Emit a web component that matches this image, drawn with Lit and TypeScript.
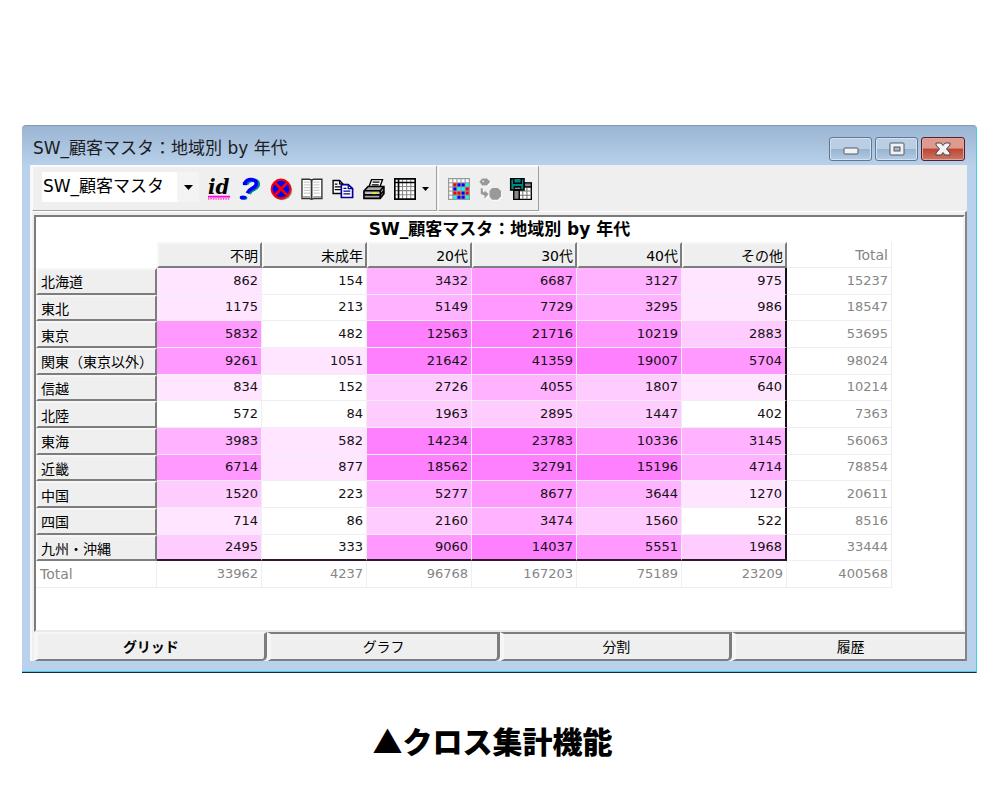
import { LitElement, html, css, svg } from "lit";
import { customElement, state } from "lit/decorators.js";
import { classMap } from "lit/directives/class-map.js";

type Row = { name: string; cells: number[]; heat: number[]; total: number };

const COLUMNS = ["不明", "未成年", "20代", "30代", "40代", "その他"];

const ROWS: Row[] = [
  { name: "北海道", cells: [862, 154, 3432, 6687, 3127, 975], heat: [1, 0, 3, 4, 3, 1], total: 15237 },
  { name: "東北", cells: [1175, 213, 5149, 7729, 3295, 986], heat: [1, 0, 3, 4, 3, 1], total: 18547 },
  { name: "東京", cells: [5832, 482, 12563, 21716, 10219, 2883], heat: [4, 0, 5, 5, 4, 2], total: 53695 },
  { name: "関東（東京以外）", cells: [9261, 1051, 21642, 41359, 19007, 5704], heat: [4, 1, 5, 5, 5, 4], total: 98024 },
  { name: "信越", cells: [834, 152, 2726, 4055, 1807, 640], heat: [1, 0, 2, 3, 2, 1], total: 10214 },
  { name: "北陸", cells: [572, 84, 1963, 2895, 1447, 402], heat: [0, 0, 2, 2, 2, 0], total: 7363 },
  { name: "東海", cells: [3983, 582, 14234, 23783, 10336, 3145], heat: [3, 1, 5, 5, 4, 3], total: 56063 },
  { name: "近畿", cells: [6714, 877, 18562, 32791, 15196, 4714], heat: [4, 1, 5, 5, 5, 3], total: 78854 },
  { name: "中国", cells: [1520, 223, 5277, 8677, 3644, 1270], heat: [2, 0, 3, 4, 3, 1], total: 20611 },
  { name: "四国", cells: [714, 86, 2160, 3474, 1560, 522], heat: [1, 0, 2, 3, 2, 0], total: 8516 },
  { name: "九州・沖縄", cells: [2495, 333, 9060, 14037, 5551, 1968], heat: [2, 0, 4, 5, 4, 2], total: 33444 },
];

const TOTALS = [33962, 4237, 96768, 167203, 75189, 23209, 400568];
const TABS = ["グリッド", "グラフ", "分割", "履歴"];

const icon = (body: unknown) => html`<svg class="icon" viewBox="0 0 16 16" aria-hidden="true">${body}</svg>`;

const dots: string[] = ["wwwww", "wrbbc", "wbccr", "wrrbr", "wcbbc"];
const dotColor: Record<string, string> = { w: "#fff", r: "#f00", b: "#00f", c: "#0ff" };

const ICONS = {
  id: icon(svg`
    <text x="7.800" y="11.400" text-anchor="middle" font-family="DejaVu Serif, serif" font-style="italic" font-weight="bold" font-size="14.500" fill="#000">id</text>
    <path d="M0 13.600h16" stroke="#f0f" stroke-width="1.400"/>
    <path d="M0 15.200h16" stroke="#f0f" stroke-width="1" stroke-dasharray="1 .8"/>
    <path d="M.5 14.500h15.500" stroke="#fc0" stroke-width=".7" stroke-dasharray=".8 1"/>`),
  help: icon(svg`
    <path d="M4.600 4.200C5.600 1.600 8 1 10 1.200c4.200.5 3.800 4.400 1 6C9 8.400 7.500 8.500 6.500 11.200" fill="none" stroke="#088" stroke-width="2.600" transform="translate(.9 .4)"/>
    <path d="M4.300 3.900C5.200 1.500 7.600 1 9.600 1.200c4 .5 3.600 4.200 1 5.800C8.600 8.200 7 8.400 6 11" fill="none" stroke="#00f" stroke-width="2.600"/>
    <path d="M2.800 2.800h3.200v2.400H2.800z" fill="#00f"/><ellipse cx="3.500" cy="14.500" rx="2.600" ry="1.400" fill="#088"/><ellipse cx="2.900" cy="14.200" rx="2.400" ry="1.400" fill="#00f"/>`),
  stop: icon(svg`
    <circle cx="8.700" cy="8.800" r="7.400" fill="#888"/>
    <circle cx="8" cy="8" r="6.800" fill="#00f" stroke="#f00" stroke-width="1.500"/>
    <path d="M3.500 3.500l9 9M12.500 3.500l-9 9" stroke="#f00" stroke-width="2"/>`),
  book: icon(svg`
    <path d="M.7.900h5.500l1.500.7 1.500-.7h6v14H9.200l-1.500.6-1.500-.6H.7z" fill="#fff" stroke="#333" stroke-width="1"/>
    <path d="M7.700 1.200v14" stroke="#333" stroke-width="1.300"/>
    <path d="M2 3h4.500M2 5h4.500M2 7h4.500M2 9h4.500M2 11h4.500M9 3h4.500M9 5h4.500M9 7h4.500M9 9h4.500M9 11h4.500" stroke="#ccc" stroke-width=".8"/>
    <path d="M1 13.700h5.500M9 13.700h5.500" stroke="#888" stroke-width=".8"/>`),
  copy: icon(svg`
    <path d="M.8 1.800h4.700l2.500 2.500v7H.8z" fill="#fff" stroke="#000"/>
    <path d="M5.500 1.800v2.500H8M2 4.500h2M2 6.500h4.500M2 8.500h4.500" fill="none" stroke="#000" stroke-width=".9"/>
    <path d="M6.800 4.800h5l3.200 3v6.400H6.800z" fill="#fff" stroke="#009" stroke-width="1.200"/>
    <path d="M11.800 4.800v3h3M8.300 7.500h2.200M8.300 9.500h5M8.300 11.500h5" fill="none" stroke="#009" stroke-width=".9"/>`),
  print: icon(svg`
    <path d="M4.300 6.500L6.200 1.200h8l-2 5.500z" fill="#fff" stroke="#000"/>
    <path d="M7 3h5M6.400 5h5" stroke="#000" stroke-width=".8"/>
    <path d="M.7 9.500l3-3.300h11.500v5.300l-2.700 3.300H.7z" fill="#aaa" stroke="#000" stroke-width="1.200"/>
    <path d="M1 9.300h11.600l2.300-3M1 12.300h11.500l2.600-3M12.500 9.300v5.200" fill="none" stroke="#000" stroke-width="1.200"/>
    <path d="M2 10.500h10v1H2z" fill="#ccc"/><path d="M7 10.300h2.800v1.400H7z" fill="#ee0"/>`),
  grid: icon(svg`
    <path d="M.6.600h14.800v14.800H.6z" fill="#fff"/>
    <path d="M6.200 1v14M9.200 1v14M12.200 1v14M1 6.200h14M1 9.200h14M1 12.200h14" stroke="#888" stroke-width=".8"/>
    <path d="M.6.600h14.800v14.800H.6zM3.300 1v14M1 3.300h14" fill="none" stroke="#000" stroke-width="1.200"/>`),
  heat: icon(svg`
    <path d="M0 0h16v16H0z" fill="#999"/>
    ${dots.map((line, r) => [...line].map((c, i) => svg`<rect x=${i * 3 + 0.9} y=${r * 3 + 0.9} width="2.200" height="2.200" fill=${dotColor[c]}/>`))}`),
  convert: icon(svg`
    <path d="M1 3.500L3 1h3l3 2.500L6.500 6H3zM2 8.500v4l2.500 1.500v2l3.500-3-3.500-3v1.500H4l-.5-3zM10 8.500h4L16.500 11v3L14 16.500h-4L8.200 14v-3z" fill="#fff"/>
    <path d="M.3 2.800L2.300.3h3.500L8.200 2.800 5.800 5.500H2.300zM1.300 7.500v4.200l2.700 1v2.300l3-3.200-3-2.800v1.300H3L2.500 7.500zM9.500 7.200h4.200L16 9.500v4l-2.300 2.300H9.500L7.700 13.500v-4z" fill="#999"/>
    <circle cx="3" cy="2.400" r=".6" fill="#fff"/>`),
  export: icon(svg`
    <path d="M6.500 4h9v11.500h-9z" fill="#fff" stroke="#000"/>
    <path d="M10.500 3.500h5v3h-5z" fill="#888" stroke="#000"/>
    <path d="M9.300 9v6.500M12.300 7v8.500M6 9.500h9.500M6 12.500h9.500" stroke="#777" stroke-width=".8"/>
    <path d="M.5.500h9.700v8.300H.5z" fill="#088" stroke="#000" stroke-width="1.100"/>
    <path d="M2.700.8v3h5.500v-3" fill="#088" stroke="#000"/><path d="M2.700 5.800h5.500v3H2.700z" fill="#000"/><path d="M3.500 7h4v1h-4z" fill="#888"/>
    <path d="M2.700 9h4v6.500h-4z" fill="#888" stroke="#000"/>`),
};

@customElement("app-root")
export class AppRoot extends LitElement {
  @state() private active = 0;

  static styles = css`
    :host {
      display: block;
      box-sizing: border-box;
      min-height: 100vh;
      padding: 125px 23px 32px 22px;
      background: #fff;
      color: #000;
      font: 13px/20px "DejaVu Sans", "Noto Sans CJK JP", sans-serif;
    }
    * { box-sizing: border-box; }
    button, select { font: inherit; color: inherit; margin: 0; padding: 0; border: 0; background: none; }
    .window {
      padding: 0 9px 11px 8px;
      border-radius: 4px 4px 0 0;
      border-top: 1px solid #8399b1;
      border-right: 1px solid #45cdee;
      border-bottom: 1px solid #102c38;
      box-shadow: inset 0 -1px #45cdee;
      background: linear-gradient(#9ab5d3, #b9d1ea 40px, #b9d1ea);
    }
    .titlebar { display: flex; align-items: center; justify-content: space-between; height: 39px; }
    .caption, .combo select, .sheet-title { font-size: 17px; line-height: 25px; }
    .caption { margin: 0; padding: 6px 0 0 3px; font-weight: 400; color: #1c1c24; }
    .controls { display: flex; gap: 3px; padding: 7px 2px 0 0; }
    .control {
      display: grid; place-items: center; width: 43px; height: 24px;
      border: 1px solid #5f7795; border-radius: 3px;
      box-shadow: inset 0 0 0 1px #d3e1f0;
      background: linear-gradient(#bacee4 48%, #98b3cf 50%, #b4cce4);
    }
    .control.close {
      width: 44px;
      border-color: #54202a;
      box-shadow: inset 0 0 0 1px #e2a49a;
      background: linear-gradient(#dd9a8f 46%, #bd4431 50%, #cc7765);
    }
    .glyph { display: block; width: 16px; height: 14px; }
    .client { background: #efefef; border-left: 2px solid #f8f8f8; }
    .toolbar { display: flex; gap: 1px; height: 46px; }
    .group {
      display: flex; align-items: center; padding: 0 6px 0 2px;
      border-top: 2px solid #fbfbfb; border-left: 1px solid #fbfbfb;
      border-right: 1px solid #a0a0a0; border-bottom: 1px solid #a0a0a0;
    }
    .group + .group { padding: 0 2px 0 4px; }
    .combo { display: grid; grid-template-columns: 135px 22px; align-items: stretch; height: 30px; margin: 0 4px 3px 7px; background: #fff; }
    .combo select { grid-area: 1 / 1 / 2 / 3; appearance: none; padding: 0 0 2px 1px; }
    .drop { grid-area: 1 / 2; display: grid; place-items: center; background: #f4f4f4; pointer-events: none; }
    .tool { display: grid; place-items: center; width: 31px; height: 32px; }
    .tool.narrow { width: 10px; }
    .icon { display: block; width: 22px; height: 22px; overflow: visible; }
    .arrow { display: block; width: 9px; height: 5px; }
    .tool .arrow { width: 7px; height: 4px; }
    .panel {
      padding: 3px 0 0 2px;
      border-top: 1px solid #fff;
      border-right: 2px solid #848484;
    }
    .sheet {
      height: 417px; overflow: auto;
      border-top: 2px solid #7b7b7b; border-left: 2px solid #7b7b7b;
      border-right: 2px solid #f4f4f4; border-bottom: 2px solid #e9e9e9;
      background: #fff;
    }
    .sheet-title { margin: 0; font-weight: 700; text-align: center; }
    table { border-collapse: separate; border-spacing: 0; table-layout: fixed; width: 856px; height: 346px; }
    .namecol { width: 121px; }
    th, td { height: 26px; padding: 0 3px; text-align: right; font-weight: 400; line-height: 20px; white-space: nowrap; border-right: 1px solid #f0eef0; border-bottom: 1px solid #f0eef0; }
    td { color: #141014; }
    td.corner { border: 0; }
    th { font-size: 14px; }
    th.head {
      background: #efefef; border-top: 2px solid #f6f6f6; border-left: 2px solid #f8f8f8;
      border-right: 2px solid #7d7d7d; border-bottom: 2px solid #7d7d7d; padding: 2px 2px 0 0;
    }
    th.row { text-align: left; padding-left: 3px; }
    th.total, td.total { color: #858585; }
    th.total.name { text-align: left; padding-left: 4px; }
    td.last { border-right: 2px solid #1a101a; }
    tr.final td.cell { border-bottom: 2px solid #301830; }
    .h1 { background: #ffe5ff; }
    .h2 { background: #ffccff; }
    .h3 { background: #ffb2ff; }
    .h4 { background: #ff99ff; }
    .h5 { background: #ff80ff; }
    .tabs { display: grid; grid-template-columns: repeat(4, 1fr); }
    .tab {
      height: 29px; font-size: 14px; line-height: 20px;
      border-top: 2px solid #7d7d7d; border-left: 4px solid #f6f6f6;
      border-right: 3px solid #7d7d7d; border-bottom: 2px solid #7d7d7d;
      border-bottom-right-radius: 5px;
    }
    .tab.active { font-weight: 700; border-top-color: #f6f6f6; }
    .tab:last-child { border-right: 0; border-bottom-right-radius: 0; }
    .note {
      margin: 46px 0 0; padding-right: 14px; text-align: center;
      font: 900 30px/42px "Noto Sans CJK JP", sans-serif;
    }
  `;

  private tool(name: string, glyph: unknown) {
    return html`<button class="tool" type="button" aria-label=${name}>${glyph}</button>`;
  }

  private arrow() {
    return html`<svg class="arrow" viewBox="0 0 9 5" aria-hidden="true"><path d="M0 0h9L4.500 5z" fill="#000" /></svg>`;
  }

  render() {
    return html`
      <section class="window">
        <header class="titlebar">
          <h1 class="caption">SW_顧客マスタ：地域別 by 年代</h1>
          <div class="controls">
            <button class="control" type="button" aria-label="最小化">
              <svg class="glyph" viewBox="0 0 16 14"><rect x="1" y="6" width="14" height="6" rx="1" fill="#f2f2f2" stroke="#505868" /></svg>
            </button>
            <button class="control" type="button" aria-label="最大化">
              <svg class="glyph" viewBox="0 0 16 14"><rect x="1" y="1" width="14" height="12" rx="1" fill="#f2f2f2" stroke="#505868" /><rect x="5" y="5" width="6" height="4" fill="#9db8d5" stroke="#505868" /></svg>
            </button>
            <button class="control close" type="button" aria-label="閉じる">
              <svg class="glyph" viewBox="0 0 16 14"><path d="M1 1h5l2 2.500L10 1h5v2l-3.500 4L15 11v2h-5l-2-2.500L6 13H1v-2l3.500-4L1 3z" fill="#f2f2f2" stroke="#50444c" /></svg>
            </button>
          </div>
        </header>
        <div class="client">
          <div class="toolbar">
            <div class="group">
              <div class="combo">
                <select aria-label="マスタ"><option>SW_顧客マスタ</option></select>
                <span class="drop">${this.arrow()}</span>
              </div>
              ${this.tool("ID", ICONS.id)} ${this.tool("ヘルプ", ICONS.help)} ${this.tool("中止", ICONS.stop)}
              ${this.tool("ブック", ICONS.book)} ${this.tool("コピー", ICONS.copy)} ${this.tool("印刷", ICONS.print)}
              ${this.tool("表", ICONS.grid)}
              <button class="tool narrow" type="button" aria-label="表の種類">${this.arrow()}</button>
            </div>
            <div class="group">
              ${this.tool("色分け", ICONS.heat)} ${this.tool("変換", ICONS.convert)} ${this.tool("書き出し", ICONS.export)}
            </div>
          </div>
          <div class="panel">
            <div class="sheet">
              <h2 class="sheet-title" id="sheet-title">SW_顧客マスタ：地域別 by 年代</h2>
              <table aria-labelledby="sheet-title">
                <colgroup><col class="namecol" />${[...COLUMNS, ""].map(() => html`<col />`)}</colgroup>
                <thead>
                  <tr>
                    <td class="corner"></td>
                    ${COLUMNS.map((c) => html`<th class="head" scope="col">${c}</th>`)}
                    <th class="total" scope="col">Total</th>
                  </tr>
                </thead>
                <tbody>
                  ${ROWS.map((row, r) => html`
                    <tr class=${classMap({ final: r === ROWS.length - 1 })}>
                      <th class="head row" scope="row">${row.name}</th>
                      ${row.cells.map((v, i) => html`<td class=${`cell h${row.heat[i]}${i === 5 ? " last" : ""}`}>${v}</td>`)}
                      <td class="total">${row.total}</td>
                    </tr>`)}
                  <tr>
                    <th class="total name" scope="row">Total</th>
                    ${TOTALS.map((v) => html`<td class="total">${v}</td>`)}
                  </tr>
                </tbody>
              </table>
            </div>
            <div class="tabs" role="tablist">
              ${TABS.map((t, i) => html`
                <button type="button" role="tab" aria-selected=${i === this.active}
                  class=${classMap({ tab: true, active: i === this.active })}
                  @click=${() => (this.active = i)}>${t}</button>`)}
            </div>
          </div>
        </div>
      </section>
      <p class="note">▲クロス集計機能</p>
    `;
  }
}
